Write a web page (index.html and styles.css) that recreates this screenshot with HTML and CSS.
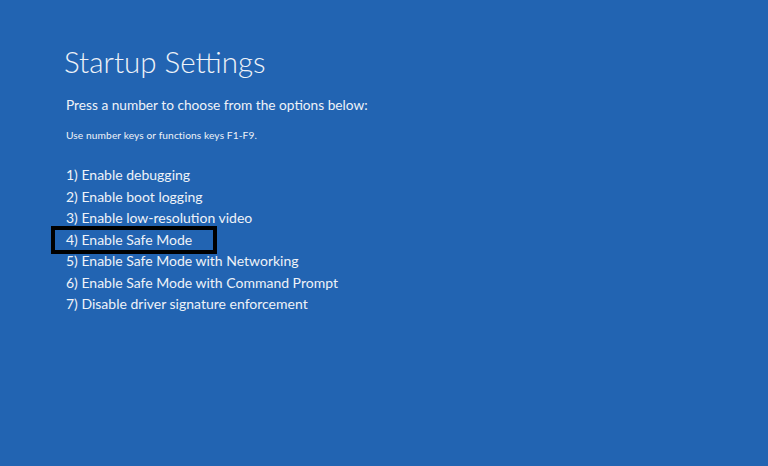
FILE: index.html
```html
<!DOCTYPE html>
<html lang="en">

<head>
    <meta charset="UTF-8">
    <meta name="viewport" content="width=device-width, initial-scale=1.0">
    <title>Startup Settings</title>
    <link rel="stylesheet" href="styles.css">
</head>

<body>
<div class="screen">
    <h1 class="title">Startup Settings</h1>
    <p class="lead">Press a number to choose from the options below:</p>
    <p class="hint">Use number keys or functions keys F1-F9.</p>
    <ul class="options">
        <li>1) Enable debugging</li>
        <li>2) Enable boot logging</li>
        <li>3) Enable low-resolution video</li>
        <li class="selected">4) Enable Safe Mode</li>
        <li>5) Enable Safe Mode with Networking</li>
        <li>6) Enable Safe Mode with Command Prompt</li>
        <li>7) Disable driver signature enforcement</li>
    </ul>
</div>
</body>

</html>
```

FILE: styles.css
```css
body,
html {
    width: 100%;
    height: 100%;
    padding: 0;
    margin: 0;
}

body {
    background-color: #2264b2;
    color: #eef2f8;
    font-family: "Lato", "Open Sans", sans-serif;
}

.screen {
    padding: 42px 0 0 64px;
}

.title {
    margin: 0;
    font-size: 29.5px;
    font-weight: 300;
    line-height: 40px;
}

.lead {
    margin: 13px 0 0 2px;
    font-size: 13.7px;
    line-height: 20px;
}

.hint {
    margin: 13px 0 0 2px;
    font-size: 10.2px;
    letter-spacing: 0.1px;
    line-height: 14px;
}

.options {
    list-style: none;
    margin: 22px 0 0 2px;
    padding: 0;
    font-size: 14px;
    line-height: 21.5px;
}

.selected {
    width: 166px;
    box-sizing: border-box;
    margin: -3px 0 -3.5px -15px;
    padding-left: 11px;
    border: 4px solid #000;
    line-height: 20px;
}
```
